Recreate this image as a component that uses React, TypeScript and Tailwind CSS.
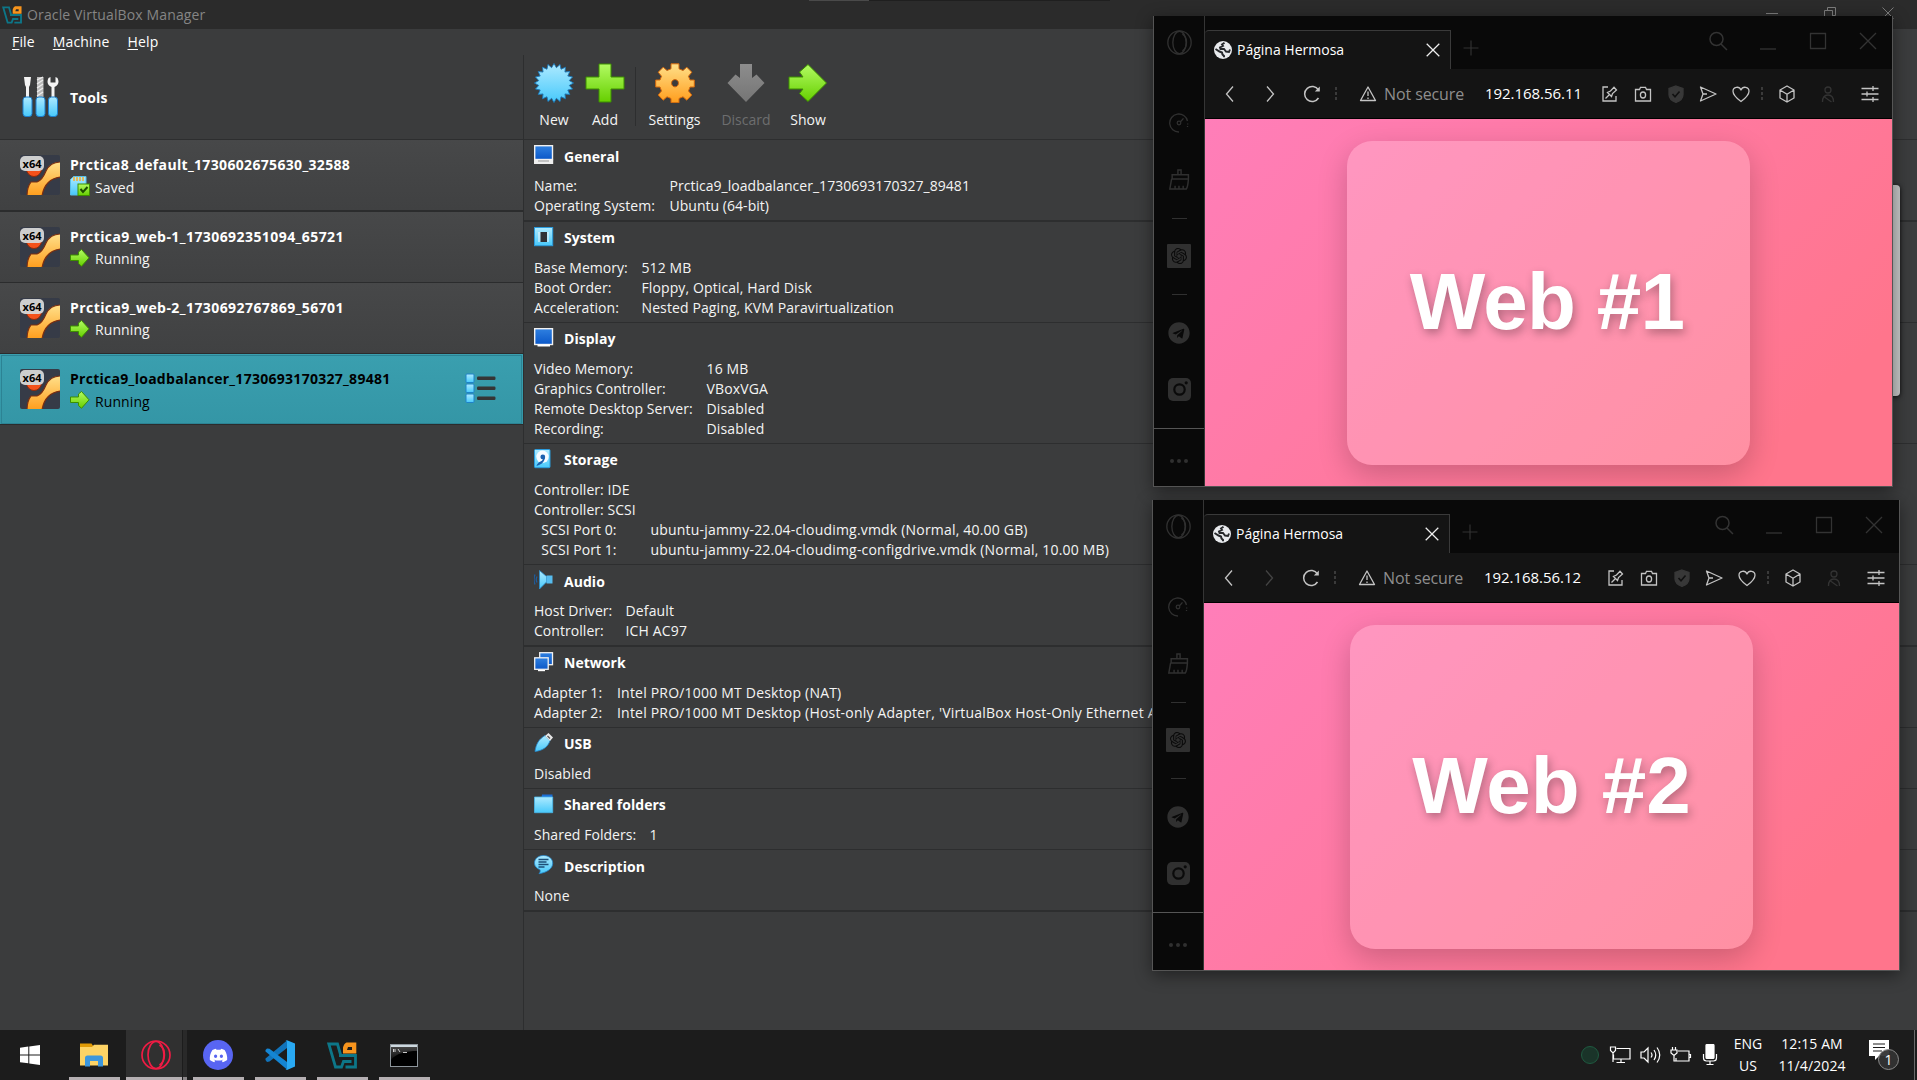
import React from "react";
import { FaDiscord, FaTelegram } from "react-icons/fa";
import { SiOpenai } from "react-icons/si";

type Kids = { children?: React.ReactNode };

/* ---------- shared gradients ---------- */
const Defs = () => (
  <svg width="0" height="0" className="absolute">
    <defs>
      <linearGradient id="blue" x1="0" y1="0" x2="0" y2="1">
        <stop offset="0" stopColor="#aeeaff" />
        <stop offset="1" stopColor="#47c9fb" />
      </linearGradient>
      <linearGradient id="deep" x1="0" y1="0" x2="0" y2="1">
        <stop offset="0" stopColor="#2f80e0" />
        <stop offset="1" stopColor="#0a57c8" />
      </linearGradient>
      <linearGradient id="green" x1="0" y1="0" x2="0" y2="1">
        <stop offset="0" stopColor="#b2fb62" />
        <stop offset="1" stopColor="#66cf00" />
      </linearGradient>
      <linearGradient id="orange" x1="0" y1="0" x2="0" y2="1">
        <stop offset="0" stopColor="#ffe08a" />
        <stop offset="1" stopColor="#ff9d1c" />
      </linearGradient>
      <linearGradient id="gray" x1="0" y1="0" x2="0" y2="1">
        <stop offset="0" stopColor="#8d8d8d" />
        <stop offset="1" stopColor="#757575" />
      </linearGradient>
      <linearGradient id="term" x1="0" y1="0" x2="0" y2="1">
        <stop offset="0" stopColor="#555" />
        <stop offset="1" stopColor="#111" />
      </linearGradient>
    </defs>
  </svg>
);

/* ---------- VirtualBox icons ---------- */
const VBoxLogo = ({ className }: { className: string }) => (
  <svg className={className} viewBox="0 0 30 27" fill="none">
    <path d="M13.500 12.500L10.500 2H1.800l6.700 23h6l2-5.500h8" stroke="#0d7688" strokeWidth="2.800" />
    <path d="M12 13.500h16.500V25H18.500" stroke="#0d7688" strokeWidth="2.800" />
    <path d="M19.500 0.500h9.800v11H16v-6q1-4 3.500-5zM21 5l-1 3h5V5z" fill="#f7941d" fillRule="evenodd" />
  </svg>
);

const ToolsIcon = () => (
  <svg width="38" height="42" viewBox="0 0 38 42">
    <path d="M3 1h7l-1 8-1 2v11H5V11L4 9z" fill="#f4f4f4" />
    <path d="M16 1h6.500v21H16z" fill="#b9b9b9" />
    <path d="M16 4l6-3M16 8l6-4M16 12l6-4M16 16l6-4M16 20l6-4" stroke="#eee" strokeWidth="1.300" />
    <path d="M27.500 2c-2 4-1 7 3 9v11h3V11c4-2 5-5 3-9l-2-1v5.500h-5V1z" fill="#f4f4f4" />
    {[2, 15, 27.5].map((x) => (
      <rect key={x} x={x} y="21" width="9" height="19.500" rx="3" fill="url(#blue)" stroke="#1d7fce" strokeWidth="1" />
    ))}
  </svg>
);

const MachineIcon = () => (
  <div className="relative h-10 w-10 shrink-0 overflow-hidden rounded-[2px] bg-[#363b47]">
    <svg width="40" height="40" viewBox="0 0 40 40">
      <circle cx="14" cy="14" r="7.500" fill="#f4511a" stroke="#8d2a0c" />
      <path d="M7 41c0-6 1-10 4-14h6c5-2 7-6 9-11 3-6 7-9 15-9v15c-10 1-17 7-19 19z" fill="url(#orange)" stroke="#7c2f10" strokeWidth="1.200" />
    </svg>
    <span className="absolute left-0 top-[1px] flex h-[15px] w-[24px] items-center justify-center rounded-[5px] bg-[#d6d6d6]/95 text-[11px] font-bold leading-none text-black">
      x64
    </span>
  </div>
);

const GreenArrow = () => (
  <svg width="20" height="18" viewBox="0 0 20 18">
    <path d="M0.500 6h8V3L11.500 0.500 19 8.800l-7.500 8.500-3-2.800v-3h-8z" fill="url(#green)" stroke="#3d8f00" strokeWidth="1" />
  </svg>
);

const SavedIcon = () => (
  <svg width="20" height="20" viewBox="0 0 20 20">
    <path d="M0.500 3.500l3-3H16V19H0.500z" fill="url(#blue)" stroke="#59bfe8" />
    <path d="M4 1v4M7 1v4M10 1v4M13 1v4" stroke="#f0b13a" strokeWidth="1.600" />
    <rect x="8" y="8" width="11.500" height="11.500" fill="url(#green)" stroke="#3d8f00" />
    <path d="M10.500 13l2.500 3 4.500-5" stroke="#1c4d00" strokeWidth="2" fill="none" />
  </svg>
);

const ListIcon = () => (
  <svg width="32" height="32" viewBox="0 0 32 32">
    {[1, 11, 21].map((y) => (
      <g key={y}>
        <rect x="1" y={y} width="8" height="8.500" rx="1" fill="url(#blue)" stroke="#1f82c9" />
        <rect x="12" y={y + 2.5} width="18.500" height="3.500" rx="1.200" fill="#353535" />
      </g>
    ))}
  </svg>
);

const star = Array.from({ length: 40 }, (_, i) => {
  const r = i % 2 ? 15.5 : 19.5;
  const a = (i * Math.PI) / 20 - Math.PI / 2;
  return `${(20 + r * Math.cos(a)).toFixed(2)},${(20 + r * Math.sin(a)).toFixed(2)}`;
}).join(" ");

const NewIcon = () => (
  <svg width="40" height="40" viewBox="0 0 40 40">
    <polygon points={star} fill="url(#blue)" stroke="#1b77b8" strokeWidth="0.900" />
  </svg>
);
const AddIcon = () => (
  <svg width="40" height="40" viewBox="0 0 40 40">
    <path d="M14 1h12v13h13v12H26v13H14V26H1V14h13z" fill="url(#green)" stroke="#3d8f00" />
  </svg>
);
const GearIcon = () => (
  <svg width="40" height="40" viewBox="0 0 40 40">
    <g fill="url(#orange)" stroke="#d1660c" strokeWidth="1">
      <path
        fillRule="evenodd"
        d="M16 0.800h8v5l4 1.700 3.800-3.300 5 5-3.300 4 1.500 3.800h4.300v7h-4.300l-1.500 4 3.300 4-5 5.200-3.800-3.400-4 1.700v4.300h-8v-4.300l-4-1.700-3.800 3.400-5-5.200 3.300-4L5 24H0.700v-7H5l1.500-3.800-3.300-4 5-5L12 7.500l4-1.700zM20 16.500a3.500 3.700 0 1 0 0.010 0z"
      />
    </g>
  </svg>
);
const DiscardIcon = () => (
  <svg width="40" height="40" viewBox="0 0 40 40">
    <path d="M14 1h12v14l4.500-3.500 8 8.500L20 39 1.500 20l8-8.500L14 15z" fill="url(#gray)" />
  </svg>
);
const ShowIcon = () => (
  <svg width="40" height="40" viewBox="0 0 40 40">
    <path d="M1 14h14l-3.500-5L20 1.500 38.500 20 20 38.500l-8.500-8 3.500-4.500H1z" fill="url(#green)" stroke="#3d8f00" />
  </svg>
);

const SI = ({ children }: Kids) => (
  <svg width="20" height="20" viewBox="0 0 20 20" fill="none">
    {children}
  </svg>
);
const icons: Record<string, React.ReactNode> = {
  General: (
    <SI>
      <rect x="0.700" y="0.700" width="17.800" height="13.800" fill="url(#deep)" stroke="#f1f1f1" strokeWidth="1.400" />
      <path d="M0 14.500h19.200V19H0z" fill="#eee" />
      <path d="M4 16h11" stroke="#999" />
    </SI>
  ),
  System: (
    <SI>
      <rect x="0.500" y="0.500" width="18.200" height="18.200" fill="url(#blue)" stroke="#2b9bdc" />
      <path d="M4 6h11M4 8h11M4 10h11M4 12h11M4 14h11" stroke="#f6f6f6" strokeWidth="1" />
      <rect x="6.500" y="5" width="6.500" height="10" fill="#2f3136" />
    </SI>
  ),
  Display: (
    <SI>
      <rect x="0.700" y="0.700" width="17.800" height="15.800" fill="url(#deep)" stroke="#f1f1f1" strokeWidth="1.400" />
      <path d="M3.500 16.500h12.500v2H3.500z" fill="#fff" />
    </SI>
  ),
  Storage: (
    <SI>
      <rect x="0.500" y="0.500" width="15.500" height="18.200" rx="1" fill="url(#blue)" stroke="#2b9bdc" />
      <circle cx="8.500" cy="7.800" r="6.200" fill="#f6fbff" />
      <circle cx="8.800" cy="8" r="2.400" fill="#1a5fae" />
      <path d="M11 8.500c-0.500 4-3 7-8.500 8.500 0.500-2 2-3.500 4-4.500s3-2.500 3-4z" fill="#1a5fae" />
    </SI>
  ),
  Audio: (
    <SI>
      <path d="M5.500 0.500l7 6V12l-7 7z" fill="url(#blue)" stroke="#2b8fd0" strokeWidth="0.800" />
      <rect x="12.500" y="5.500" width="6" height="8" fill="#56bcef" />
      <path d="M3 6.500q-1.500 3 0 6M1 4.500q-2 5 0 10" stroke="#1f5c9c" strokeWidth="1.300" />
    </SI>
  ),
  Network: (
    <SI>
      <rect x="5.700" y="0.700" width="12.800" height="12" fill="url(#deep)" stroke="#f1f1f1" strokeWidth="1.300" />
      <rect x="0.700" y="5.800" width="13.500" height="11.500" fill="url(#deep)" stroke="#f1f1f1" strokeWidth="1.300" />
      <path d="M4 18.500h7" stroke="#fff" strokeWidth="1.400" />
    </SI>
  ),
  USB: (
    <SI>
      <path d="M1 18.500C2 11 5 6 11 2.500l5 5C14 14 9 17.500 1 18.500z" fill="url(#blue)" stroke="#2487cc" strokeWidth="0.800" />
      <path d="M11 3l3.500-3L19 4.500 16 8z" fill="#e9e9e9" />
      <path d="M13.500 3l2.500 2.500" stroke="#555" strokeWidth="1.300" />
    </SI>
  ),
  "Shared folders": (
    <SI>
      <path d="M8 0.500h10.500V6H7z" fill="#1c6fd6" />
      <path d="M0.500 3h18.200v15.700H0.500z" fill="url(#blue)" stroke="#4bb9ec" strokeWidth="0.800" />
    </SI>
  ),
  Description: (
    <SI>
      <path d="M9.500 0.500c5 0 9.200 3 9.200 7.800 0 5-5 9-13.700 10.400 1.200-1.500 1.500-2.500 1-4C2.500 13.500 0.500 11 0.500 8.300 0.500 3.500 4.500 0.500 9.500 0.500z" fill="url(#blue)" stroke="#2487cc" strokeWidth="0.800" />
      <path d="M4.500 4.500h10M4.500 7h8M4.500 9.500h10M4.500 12h6" stroke="#1d4f78" strokeWidth="1.300" />
    </SI>
  ),
};

/* ---------- VirtualBox details ---------- */
type Section = { title: string; h: string; col: string; rows: [string, string][]; track?: string; low?: boolean };
const sections: Section[] = [
  { title: "General", low: true, h: "h-[82px] border-b-2", col: "w-[135.5px]", track: "tracking-[0.03px]", rows: [["Name:", "Prctica9_loadbalancer_1730693170327_89481"], ["Operating System:", "Ubuntu (64-bit)"]] },
  { title: "System", h: "h-[101px] border-b", col: "w-[107.5px]", track: "tracking-[0.11px]", rows: [["Base Memory:", "512 MB"], ["Boot Order:", "Floppy, Optical, Hard Disk"], ["Acceleration:", "Nested Paging, KVM Paravirtualization"]] },
  { title: "Display", h: "h-[121px] border-b", col: "w-[172.5px]", track: "tracking-[0.15px]", rows: [["Video Memory:", "16 MB"], ["Graphics Controller:", "VBoxVGA"], ["Remote Desktop Server:", "Disabled"], ["Recording:", "Disabled"]] },
  { title: "Storage", h: "h-[121px] border-b", col: "w-[116.5px]", track: "tracking-[0.19px]", rows: [["Controller: IDE", ""], ["Controller: SCSI", ""], ["\u00a0\u00a0SCSI Port 0:", "ubuntu-jammy-22.04-cloudimg.vmdk (Normal, 40.00 GB)"], ["\u00a0\u00a0SCSI Port 1:", "ubuntu-jammy-22.04-cloudimg-configdrive.vmdk (Normal, 10.00 MB)"]] },
  { title: "Audio", low: true, h: "h-[82px] border-b-2", col: "w-[91.5px]", track: "tracking-[0.15px]", rows: [["Host Driver:", "Default"], ["Controller:", "ICH AC97"]] },
  { title: "Network", h: "h-[81px] border-b", col: "w-[83px]", track: "tracking-[0.2px]", rows: [["Adapter 1:", "Intel PRO/1000 MT Desktop (NAT)"], ["Adapter 2:", "Intel PRO/1000 MT Desktop (Host-only Adapter, 'VirtualBox Host-Only Ethernet Adapter')"]] },
  { title: "USB", h: "h-[61px] border-b", col: "w-[82px]", rows: [["Disabled", ""]] },
  { title: "Shared folders", h: "h-[61px] border-b", col: "w-[115.5px]", rows: [["Shared Folders:", "1"]] },
  { title: "Description", low: true, h: "h-[62px] border-b-2", col: "w-[82px]", rows: [["None", ""]] },
];

const DetailSection = ({ s }: { s: Section }) => (
  <section className={`${s.h} w-full shrink-0 overflow-hidden border-[#2d2e2f] pl-[10px] pt-[5px]`}>
    <div className="flex h-[31px] items-start">
      <div className="w-[30px] shrink-0">{icons[s.title]}</div>
      <h2 className={`text-[14px] font-bold leading-[22px] tracking-[0.04px] text-white ${s.low ? "pt-px" : ""}`}>{s.title}</h2>
    </div>
    {s.rows.map(([k, v], i) => (
      <div key={i} className="flex h-5 items-center whitespace-nowrap leading-5 text-[#f4f4f4]">
        <span className={`${s.col} shrink-0 tracking-[0.05px]`}>{k}</span>
        <span className={s.track ?? ""}>{v}</span>
      </div>
    ))}
  </section>
);

const Tool = ({ icon, label, w, dim }: { icon: React.ReactNode; label: string; w: string; dim?: boolean }) => (
  <div className={`flex ${w} shrink-0 flex-col items-center`}>
    {icon}
    <span className={`mt-[7px] leading-5 ${dim ? "text-[#6d6e6f]" : "text-[#f4f4f4]"}`}>{label}</span>
  </div>
);

const machines = [
  { name: "Prctica8_default_1730602675630_32588", saved: true, cls: "h-[72px] border-b-2", track: "tracking-[0.33px]" },
  { name: "Prctica9_web-1_1730692351094_65721", cls: "h-[71px] border-b", track: "tracking-[0.43px]" },
  { name: "Prctica9_web-2_1730692767869_56701", cls: "h-[71px] border-b", track: "tracking-[0.43px]" },
  { name: "Prctica9_loadbalancer_1730693170327_89481", selected: true, cls: "h-[71px] border-b", track: "tracking-[0.28px]" },
];

const VirtualBox = () => (
  <div className="flex h-[1030px] flex-col bg-[#3b3c3d] font-['Open_Sans',sans-serif] text-[14px]">
    <header className="flex h-[29px] shrink-0 items-center bg-[#2b2b2b] pl-[2px]">
      <VBoxLogo className="h-[18px] w-[20px]" />
      <span className="ml-[5px] text-[14px] tracking-[0.14px] text-[#858585]">Oracle VirtualBox Manager</span>
      <div className="ml-auto flex items-center gap-[46px] self-start pr-[23px] pt-[7px] text-[#7d7d7d]">
        <svg width="12" height="12" viewBox="0 0 12 12" stroke="currentColor"><path d="M0 6.500h12" /></svg>
        <svg width="12" height="12" viewBox="0 0 12 12" stroke="currentColor" fill="none"><path d="M0.500 3.500h8v8h-8zM3.500 3V0.500h8v8H9" /></svg>
        <svg width="12" height="12" viewBox="0 0 12 12" stroke="currentColor"><path d="M0.500 0.500l11 11M11.500 0.500l-11 11" /></svg>
      </div>
    </header>
    <nav className="flex h-[26px] shrink-0 items-center gap-[18px] pb-[2px] pl-[12px] tracking-[0.15px] text-white">
      <span><u className="underline-offset-2">F</u>ile</span>
      <span><u className="underline-offset-2">M</u>achine</span>
      <span><u className="underline-offset-2">H</u>elp</span>
    </nav>
    <div className="flex min-h-0 flex-1">
      <aside className="w-[523px] shrink-0">
        <div className="flex h-[85px] items-center gap-[11px] border-b border-[#2d2e2f] pl-[21px]">
          <ToolsIcon />
          <span className="font-bold tracking-[0.2px] text-white">Tools</span>
        </div>
        {machines.map((m) => (
          <div
            key={m.name}
            className={`${m.cls} flex border-[#2b2c2d] pl-5 pt-[15px] ${m.selected ? "bg-linear-to-b from-[#3a9faf] to-[#3496a6] text-black outline-1 -outline-offset-2 outline-[#2c8394]" : "bg-linear-to-b from-[#474849] to-[#404142] text-[#f4f4f4]"}`}
          >
            <MachineIcon />
            <div className="ml-[10px]">
              <div className={`whitespace-nowrap font-bold leading-5 ${m.track} ${m.selected ? "" : "text-white"}`}>{m.name}</div>
              <div className="flex h-[22px] items-center gap-[5px]">
                {m.saved ? <SavedIcon /> : <GreenArrow />}
                <span className={`tracking-[0.1px] ${m.saved || m.selected ? "pt-[3px]" : "pt-[1px]"}`}>{m.saved ? "Saved" : "Running"}</span>
              </div>
            </div>
            {m.selected && <div className="ml-auto mr-[26px] mt-[4px]"><ListIcon /></div>}
          </div>
        ))}
      </aside>
      <main className="flex min-w-0 flex-1 flex-col border-l border-[#2d2e2f]">
        <div className="flex h-[85px] shrink-0 border-b border-[#2d2e2f] pl-[4px] pt-[8px]">
          <Tool icon={<NewIcon />} label="New" w="w-[52px]" />
          <Tool icon={<AddIcon />} label="Add" w="w-[50px]" />
          <div className="ml-[5px] mt-[4px] h-[59px] w-px bg-[#2d2e2f]" />
          <Tool icon={<GearIcon />} label="Settings" w="w-[77px]" />
          <Tool icon={<DiscardIcon />} label="Discard" w="w-[66px]" dim />
          <Tool icon={<ShowIcon />} label="Show" w="w-[58px]" />
        </div>
        {sections.map((s) => <DetailSection key={s.title} s={s} />)}
      </main>
    </div>
  </div>
);

/* ---------- browser windows ---------- */
const Ic = ({ s = 20, c = "text-[#c4c4c4]", sw = 1.3, children }: { s?: number; c?: string; sw?: number } & Kids) => (
  <svg width={s} height={s} viewBox="0 0 20 20" fill="none" stroke="currentColor" strokeWidth={sw} className={`${c} block shrink-0`}>
    {children}
  </svg>
);

const OperaRing = ({ className, sw }: { className: string; sw: number }) => (
  <svg viewBox="0 0 30 30" fill="none" stroke="currentColor" strokeWidth={sw} className={className}>
    <circle cx="15" cy="15" r="14" />
    <ellipse cx="15" cy="15" rx="8" ry="13.500" />
    <path d="M18.500 5c6.500 4 6.500 16 0 20" />
  </svg>
);

const Slot = ({ h, children }: { h: string } & Kids) => (
  <div className={`${h} flex w-full shrink-0 items-center justify-center`}>{children}</div>
);

const SideBar = () => (
  <aside className="flex w-[51px] shrink-0 flex-col border-r border-[#353535] bg-[#090909] text-[#303030]">
    <Slot h="h-[53px]"><OperaRing className="h-[25px] w-[25px]" sw={1.6} /></Slot>
    <div className="h-[35px] shrink-0" />
    <Slot h="h-[38px]">
      <Ic c="text-[#303030]" sw={1.3}>
        <path d="M10 19A9 9 0 1 1 18.500 8M18.700 10.500v1M18.500 13v1" />
        <circle cx="10" cy="10" r="1.800" /><path d="M11.500 8.700l3-3.300" />
      </Ic>
    </Slot>
    <div className="h-[18px] shrink-0" />
    <Slot h="h-[38px]">
      <Ic s={21} c="text-[#303030]" sw={1.4}>
        <path d="M8.500 5V1h3v4M3 5.500h15.500v4H3zM2.500 9.500L0.800 19h15.700q1.500-2 2-9.500M5.800 19v-3M9.500 19v-3M13.500 19v-3" />
      </Ic>
    </Slot>
    <div className="h-px shrink-0" />
    <Slot h="h-[38px]"><div className="h-px w-[15px] bg-[#303030]" /></Slot>
    <Slot h="h-[38px]">
      <div className="flex h-6 w-6 items-center justify-center rounded-[1px] bg-[#303030] text-[#0a0a0a]"><SiOpenai size={16} /></div>
    </Slot>
    <Slot h="h-[38px]"><div className="h-px w-[15px] bg-[#303030]" /></Slot>
    <Slot h="h-[40px]"><FaTelegram size={22} /></Slot>
    <Slot h="h-[72px]">
      <svg width="23" height="23" viewBox="0 0 23 23">
        <rect width="23" height="23" rx="5" fill="#303030" />
        <circle cx="11.500" cy="11.500" r="5.200" fill="none" stroke="#0a0a0a" strokeWidth="2.200" />
        <circle cx="18.200" cy="4.800" r="1.600" fill="#0a0a0a" />
      </svg>
    </Slot>
    <div className="h-[3px] shrink-0" />
    <div className="flex flex-1 items-center justify-center gap-[3px] border-t border-[#555] pt-[6px]">
      {[0, 1, 2].map((i) => <i key={i} className="h-1 w-1 rounded-full bg-[#303030]" />)}
    </div>
  </aside>
);

const Dots = ({ c }: { c: string }) => (
  <div className={`flex ${c} shrink-0 flex-col items-center gap-[2.5px]`}>
    {[0, 1, 2].map((i) => <i key={i} className="h-[2.5px] w-[2.5px] bg-[#3a3a3a]" />)}
  </div>
);

type BrowserProps = { frame: string; url: string; heading: string; headingCls: string; fwd: boolean; inset: string };
const Browser = ({ frame, url, heading, headingCls, fwd, inset }: BrowserProps) => (
  <div className={`absolute ${frame} flex border border-t-0 border-[#555] bg-[#090909] font-['Open_Sans',sans-serif] shadow-[0_4px_16px_rgba(0,0,0,0.45)]`}>
    <SideBar />
    <div className="flex min-w-0 flex-1 flex-col">
      <div className={`flex h-[53px] shrink-0 items-start ${inset}`}>
        <div className="mt-[14px] flex h-[39px] w-[246px] shrink-0 items-center rounded-tl-[4px] border-r border-t border-[#3a3a3a] bg-[#141414] pl-[9px] pr-[8px]">
          <svg width="18" height="18" viewBox="0 0 18 18">
            <circle cx="9" cy="9" r="9" fill="#e8eaed" />
            <path d="M10.500 1.800L8 3.500l1 1.500-3 1.500 0.500 1.500h3.500l2 2.500 3 0.500 1-2.500" fill="none" stroke="#26282b" strokeWidth="1.900" />
            <path d="M1.500 8l4 2.500 2.500 1 0.500 2 1.500 1.500v1.200" fill="none" stroke="#26282b" strokeWidth="2" />
          </svg>
          <span className="ml-[5px] whitespace-nowrap pb-[2px] text-[14px] text-white">Página Hermosa</span>
          <Ic s={18} c="ml-auto text-[#eee]" sw={1.4}><path d="M3 3l14 14M17 3L3 17" /></Ic>
        </div>
        <Ic s={20} c="ml-[10px] mt-[22px] text-[#333]" sw={1.1}><path d="M10 2.500v15M2.500 10h15" /></Ic>
        <div className="ml-auto flex items-center gap-[30px] pr-[14px] pt-[15px]">
          <Ic s={20} c="text-[#333]" sw={1.5}><circle cx="8.500" cy="8" r="6.500" /><path d="M13 13l6 6" /></Ic>
          <Ic s={20} c="text-[#333]" sw={1.3}><path d="M2 18h16" /></Ic>
          <Ic s={20} c="text-[#333]" sw={1.3}><path d="M2.500 2.500h15v15h-15z" /></Ic>
          <Ic s={20} c="text-[#333]" sw={1.3}><path d="M2 2l16 16M18 2L2 18" /></Ic>
        </div>
      </div>
      <div className={`h-[50px] shrink-0 border-b border-black bg-[#141414] ${inset}`}>
        <div className="flex h-full items-center pl-[15px] pr-[12px]">
          <Ic><path d="M13 2.500L6.500 10l6.500 7.500" /></Ic>
          <div className="w-[20px] shrink-0" />
          <Ic c={fwd ? "text-[#c4c4c4]" : "text-[#444]"}><path d="M7 2.500l6.500 7.500L7 17.500" /></Ic>
          <div className="w-[22px] shrink-0" />
          <Ic sw={1.5}><path d="M16.500 14A7.500 7.500 0 1 1 16.500 6" /><path d="M17.800 2.500v5h-5z" fill="currentColor" stroke="none" /></Ic>
          <Dots c="ml-[12px] w-[4px]" />
          <div className="w-[20px] shrink-0" />
          <Ic><path d="M10 3l7.500 13.500h-15z" strokeLinejoin="round" /><path d="M10 7.500v4.500M10 13.500v1.500" /></Ic>
          <span className="ml-[6px] w-[101px] shrink-0 whitespace-nowrap text-[16px] tracking-[-0.1px] text-[#8e8e8e]">Not secure</span>
          <span className="whitespace-nowrap text-[15px] tracking-[-0.05px] text-white">{url}</span>
          <div className="ml-auto flex items-center gap-[12.7px]">
            <Ic><path d="M8 3H3v14h13v-5M5.500 14.500l3.500-3.500M7.500 8.500l4 4 1-3 4-3.500-2.500-2.800-3.500 3.800z" /></Ic>
            <Ic><path d="M2.500 5.500h4l1-2.200h5l1 2.200h4v11.500h-15z" /><ellipse cx="10" cy="11" rx="2.600" ry="3" /></Ic>
            <Ic c="text-[#383838]"><path d="M10 2l7 2.500v6c0 4-3 6.500-7 8-4-1.500-7-4-7-8v-6z" fill="#383838" /><path d="M6.500 10l2.500 2.800 4.500-5.200" stroke="#111" strokeWidth="1.600" /></Ic>
            <Ic><path d="M2.500 3l15.500 7-15.500 7 2.500-7zM5 10h4" strokeLinejoin="round" /></Ic>
            <Ic><path d="M10 17.500C4 13 2 10 2 7.200 2 3 8 1.500 10 6c2-4.500 8-3 8 1.200 0 2.800-2 5.800-8 10.300z" strokeLinejoin="round" /></Ic>
          </div>
          <Dots c="ml-[9px] w-[4px]" />
          <Ic c="ml-[13px] text-[#c4c4c4]"><path d="M10 2l7 4v8l-7 4-7-4V6zM3 6l7 4.200L17 6M10 10.200V18" strokeLinejoin="round" /></Ic>
          <Ic c="ml-[21px] text-[#333]"><circle cx="10" cy="6" r="3" /><path d="M4.500 18c0-4 1.500-7 5.500-7s5.500 3 5.500 7M6.500 13l7 5" /></Ic>
          <Ic c="ml-[22px] text-[#c4c4c4]"><path d="M1.500 4.500h17M1.500 10h17M1.500 15.500h17M13 2v5M7 7.500v5M13 13v5" /></Ic>
        </div>
      </div>
      <div className="flex min-h-0 flex-1 items-center justify-center overflow-hidden bg-[linear-gradient(135deg,#ff7eb9,#ff758c_85%)]">
        <div className="flex h-[324px] w-[403px] items-center justify-center rounded-[25px] bg-white/20 shadow-[0_10px_30px_rgba(0,0,0,0.2)]">
          <h1 className={`pb-[2px] font-['Liberation_Sans',Arial,sans-serif] text-[80px] font-bold leading-none text-white [text-shadow:2px_4px_10px_rgba(0,0,0,0.3)] ${headingCls}`}>
            {heading}
          </h1>
        </div>
      </div>
    </div>
  </div>
);

/* ---------- taskbar ---------- */
const TaskItem = ({ children, active }: { active?: boolean } & Kids) => (
  <div className={`relative flex h-[50px] shrink-0 items-center justify-center ${active ? "w-[61px] bg-[#303030]" : "w-[51px] pr-px"}`}>
    {children}
    <div className={`absolute bottom-0 left-0 h-[3px] bg-[#b5afb2] ${active ? "w-[56px]" : "w-full"}`} />
    {active && <div className="absolute right-0 top-0 h-[50px] w-[5px] border-l border-[#1c1c1c] bg-[#292929]"><div className="mt-[47px] h-[3px] bg-[#8a8688]" /></div>}
  </div>
);

const TaskBar = () => (
  <footer className="flex h-[50px] items-center bg-[#1c1c1c] font-['Open_Sans',sans-serif] text-white">
    <div className="flex w-[69px] justify-center pr-[9px]">
      <svg width="20" height="20" viewBox="0 0 20 20" fill="#fff">
        <path d="M0 2.800L8.300 1.600v7.900H0zM9.300 1.500L20 0v9.500H9.300zM0 10.400h8.300v7.900L0 17.200zM9.300 10.400H20V20L9.300 18.500z" />
      </svg>
    </div>
    <TaskItem>
      <svg width="28" height="24" viewBox="0 0 28 24">
        <path d="M0 0.500h11.500l2 3H27V8H0z" fill="#e09a05" />
        <path d="M0 4h12l2-2.200h14V22.500H0z" fill="#fdd365" />
        <path d="M5 23.500V15q0-2.500 2.500-2.500h13Q23 12.500 23 15v8.500h-5V18h-8v5.500z" fill="#3d97dd" />
      </svg>
    </TaskItem>
    <div className="w-[6px]" />
    <TaskItem active><span className="pr-[1px] text-[#ef1c44]"><OperaRing className="h-[30px] w-[30px]" sw={1.7} /></span></TaskItem>
    <div className="w-[6px]" />
    <TaskItem>
      <div className="flex h-[30px] w-[30px] items-center justify-center rounded-full bg-[#5865f2]"><FaDiscord size={19} /></div>
    </TaskItem>
    <div className="w-[11px]" />
    <TaskItem>
      <svg width="30" height="30" viewBox="0 0 30 30">
        <path d="M22 0.500v7.500L4.500 21.500 2 22 0.500 20v-1.500z" fill="#1173ba" />
        <path d="M0.500 11.500V10L2 8.500l2.500 0.300L22 22v7.500z" fill="#1485d3" />
        <path d="M22 0.200L30 3.500v23l-8 3.400-1.500-0.900c0.800 0.300 1.500 0 1.500-1V2c0-1-0.700-1.300-1.500-1z" fill="#29a9f3" />
      </svg>
    </TaskItem>
    <div className="w-[11px]" />
    <TaskItem><VBoxLogo className="h-[27px] w-[30px]" /></TaskItem>
    <div className="w-[11px]" />
    <TaskItem>
      <svg width="28" height="23" viewBox="0 0 28 23">
        <rect x="0.500" y="0.500" width="27" height="22" fill="#000" stroke="#8d959b" />
        <path d="M1 1h26v2H1z" fill="#cdd8df" />
        <path d="M1 3h26v4C17 7 6 9 1 16z" fill="url(#term)" opacity="0.800" />
        <path d="M3.500 5v3M5 5v3M8 5l2 3M13 8.500h4" stroke="#ddd" strokeWidth="0.900" />
      </svg>
    </TaskItem>
    <div className="ml-auto flex items-center">
      <div className="h-[18px] w-[18px] rounded-full border border-[#1f5a40] bg-[#1a3429]" />
      <div className="w-[10px]" />
      <svg width="22" height="18" viewBox="0 0 22 18" fill="none" stroke="#fff" strokeWidth="1.200">
        <path d="M7.500 2.500H21V13H4.500V8.500M1.500 1h5v3.500L4 7 1.500 4.500zM4 7v9M12 13v3.500M7.500 16.500H16" />
      </svg>
      <div className="w-[9px]" />
      <svg width="22" height="20" viewBox="0 0 22 20" fill="none" stroke="#fff" strokeWidth="1.200">
        <path d="M1 7h3l4-4v14l-4-4H1z" /><path d="M11 7.500q2 2.500 0 5M14 5q3.500 5 0 10M17 2.500q5.500 7.500 0 15" />
      </svg>
      <div className="w-[8px]" />
      <svg width="22" height="16" viewBox="0 0 22 16" fill="none" stroke="#fff" strokeWidth="1.200">
        <path d="M8 4h11v10H6v-3M19 7.500h1.500v3H19M2.500 0v3M5.500 0v3M1 3h6v3L4 8.500 1 6zM4 8.500V14h3" />
      </svg>
      <div className="w-[10px]" />
      <svg width="16" height="22" viewBox="0 0 16 22" fill="none" stroke="#fff" strokeWidth="1.200">
        <rect x="4" y="0.500" width="8" height="14" rx="1" fill="#fff" /><path d="M1.500 10v4q0 3 3 3h7q3 0 3-3v-4M8 17v3.500M4.500 20.500h7" />
      </svg>
      <div className="flex w-[60px] flex-col items-center text-[14px] leading-[22px]"><span>ENG</span><span>US</span></div>
      <div className="ml-px flex w-[66px] flex-col items-center whitespace-nowrap text-[14px] leading-[22px] tracking-[0.1px]"><span>12:15 AM</span><span>11/4/2024</span></div>
      <div className="relative ml-[24px] h-[31px] w-[30px]">
        <svg width="20" height="20" viewBox="0 0 20 20"><path d="M0 0h20v16H10l-4 4v-4H0z" fill="#fff" /><path d="M4 4h12M4 7.500h12M4 11h9" stroke="#1c1c1c" strokeWidth="1.200" /></svg>
        <span className="absolute left-[9px] top-[9px] flex h-[21px] w-[21px] items-center justify-center rounded-full border border-[#8a8a8a] bg-[#333]/95 text-[14px]">1</span>
      </div>
      <div className="ml-[15px] mr-[2px] h-[50px] w-px bg-[#6a6a6a]" />
    </div>
  </footer>
);

export default function App() {
  return (
    <div className="relative h-[1080px] w-[1917px] overflow-hidden bg-[#3b3c3d]">
      <Defs />
      <VirtualBox />
      <TaskBar />
      <div className="absolute left-[809px] top-0 flex h-px w-[301px] bg-[#1f1f1f]"><i className="w-[60px] bg-[#4a4a4a]" /></div>
      <div className="absolute left-[1885px] top-[185px] h-[211px] w-[15px] rounded-[4px] bg-[#c9c9c9] shadow-[0_1px_5px_rgba(0,0,0,0.8)]" />
      <Browser frame="left-[1153px] top-[16px] h-[471px] w-[740px]" url="192.168.56.11" heading="Web #1" headingCls="tracking-[-0.7px] pr-[3px]" fwd inset="pr-0" />
      <Browser frame="left-[1152px] top-[500px] h-[471px] w-[748px]" url="192.168.56.12" heading="Web #2" headingCls="" fwd={false} inset="pr-px" />
    </div>
  );
}
